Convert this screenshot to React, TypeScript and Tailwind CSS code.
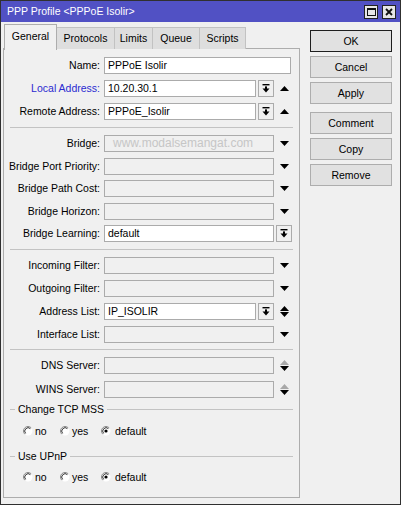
import React from "react";

const FONT = "font-['Liberation_Sans',Arial,sans-serif]";

type Arrow = "up" | "down" | "updown" | "updownGrey";

function Tri({ dir, color = "#000" }: { dir: "up" | "down"; color?: string }) {
  return (
    <svg width="9" height="5" viewBox="0 0 9 5" className="block">
      {dir === "up" ? (
        <polygon points="0,5 9,5 4.5,0" fill={color} />
      ) : (
        <polygon points="0,0 9,0 4.5,5" fill={color} />
      )}
    </svg>
  );
}

function ArrowCell({ kind }: { kind: Arrow }) {
  return (
    <div className="flex h-[17px] w-[20px] flex-col items-center justify-center gap-[1px]">
      {kind === "up" && <Tri dir="up" />}
      {kind === "down" && <Tri dir="down" />}
      {kind === "updown" && (
        <>
          <Tri dir="up" />
          <Tri dir="down" />
        </>
      )}
      {kind === "updownGrey" && (
        <>
          <Tri dir="up" color="#a8a8a8" />
          <Tri dir="down" />
        </>
      )}
    </div>
  );
}

// small "pick from list" button next to an input
function ListButton() {
  return (
    <div className="ml-[2px] flex h-[17px] w-[16px] items-center justify-center border border-[#ababab] bg-[#f0f0f0]">
      <svg width="8" height="9" viewBox="0 0 8 9" className="block">
        <rect x="0.5" y="0" width="7" height="1.4" fill="#000" />
        <rect x="3" y="2.4" width="2" height="2.6" fill="#000" />
        <polygon points="0.5,4.6 7.5,4.6 4,8.6" fill="#000" />
      </svg>
    </div>
  );
}

function Input({ value, enabled, width, watermark }: { value?: string; enabled?: boolean; width: string; watermark?: string }) {
  return (
    <div
      className={`h-[17px] ${width} overflow-hidden whitespace-nowrap border border-[#ababab] px-[3px] text-[10.5px] leading-[15px] ${
        enabled ? "bg-white text-black" : "bg-[#f0f0f0]"
      }`}
    >
      {value}
      {watermark && <span className="pl-[5px] text-[12px] text-[#c6c6c6]">{watermark}</span>}
    </div>
  );
}

type RowProps = {
  label: string;
  value?: string;
  enabled?: boolean;
  btn?: boolean;
  arrow?: Arrow;
  blue?: boolean;
  watermark?: string;
};

function Row({ label, value, enabled, btn, arrow, blue, watermark }: RowProps) {
  let width = "w-[187px]";
  if (btn && arrow) width = "w-[152px]";
  else if (btn || arrow) width = "w-[170px]";
  return (
    <div className="flex h-[17px] items-center">
      <div className={`w-[96px] whitespace-nowrap text-right text-[10.5px] leading-none ${blue ? "text-[#2b2bd0]" : "text-black"}`}>
        {label}
      </div>
      <div className="ml-[4px] flex items-center">
        <Input value={value} enabled={enabled} width={width} watermark={watermark} />
        {btn && <ListButton />}
        {arrow && <ArrowCell kind={arrow} />}
      </div>
    </div>
  );
}

function Sep({ className = "" }: { className?: string }) {
  return <div className={`mx-[6px] h-px bg-[#c3c3c3] ${className}`} />;
}

function GroupLabel({ text, className = "" }: { text: string; className?: string }) {
  return (
    <div className={`mx-[6px] flex h-[14px] items-center ${className}`}>
      <div className="h-px w-[5px] bg-[#c3c3c3]" />
      <span className="px-[3px] text-[10.5px] leading-none">{text}</span>
      <div className="h-px flex-1 bg-[#c3c3c3]" />
    </div>
  );
}

function Radio({ checked }: { checked?: boolean }) {
  return (
    <svg width="10" height="10" viewBox="0 0 10 10" className="block">
      <circle cx="5" cy="5" r="4.5" fill="#fff" />
      <path d="M1.8 8.2 A4.5 4.5 0 0 1 8.2 1.8" fill="none" stroke="#8a8a8a" strokeWidth="1" />
      <path d="M2.6 7.4 A3.4 3.4 0 0 1 7.4 2.6" fill="none" stroke="#303030" strokeWidth="1" />
      {checked && <circle cx="5" cy="5" r="1.6" fill="#000" />}
    </svg>
  );
}

function RadioRow({ className = "" }: { className?: string }) {
  const items = [
    { label: "no", w: "w-[37px]" },
    { label: "yes", w: "w-[41px]" },
    { label: "default", w: "", checked: true },
  ];
  return (
    <div className={`flex h-[14px] items-center pl-[19px] ${className}`}>
      {items.map((it) => (
        <div key={it.label} className={`flex items-center ${it.w}`}>
          <Radio checked={it.checked} />
          <span className={`${it.checked ? "ml-[4px]" : "ml-[2px]"} text-[10.5px] leading-none`}>{it.label}</span>
        </div>
      ))}
    </div>
  );
}

function Tab({ label, active, width }: { label: string; active?: boolean; width: string }) {
  if (active) {
    return (
      <div className={`relative z-10 mb-[-1px] flex h-[26px] ${width} items-start justify-center border border-b-0 border-[#adadad] bg-[#f0f0f0] pt-[6px] text-[10.5px] leading-none`}>
        {label}
      </div>
    );
  }
  return (
    <div className={`flex h-[22px] ${width} items-start justify-center border border-b-0 border-l-0 border-[#c2c2c2] bg-[#dedede] pt-[5px] text-[10.5px] leading-none`}>
      {label}
    </div>
  );
}

function SideButton({ label, primary, className = "" }: { label: string; primary?: boolean; className?: string }) {
  return (
    <div
      className={`flex h-[22px] w-[82px] items-center justify-center border bg-[#e1e1e1] text-[10.5px] leading-none ${
        primary ? "border-[#1e1e1e]" : "border-[#adadad]"
      } ${className}`}
    >
      {label}
    </div>
  );
}

export default function App() {
  return (
    <div className={`${FONT} flex h-[505px] w-[401px] flex-col border border-[#303030] bg-[#f0f0f0] text-black`}>
      {/* title bar */}
      <div className="flex h-[21px] items-center bg-[#5151c4] pl-[6px] pr-[4px]">
        <span className="flex-1 text-[10.5px] leading-none text-white">PPP Profile &lt;PPPoE Isolir&gt;</span>
        <div className="flex gap-[4px]">
          <div className="flex h-[14px] w-[14px] items-center justify-center border border-[#222] bg-[#e6e6e6]">
            <div className="h-[8px] w-[9px] border border-t-2 border-[#111]" />
          </div>
          <div className="flex h-[14px] w-[14px] items-center justify-center border border-[#222] bg-[#e6e6e6]">
            <svg width="8" height="8" viewBox="0 0 8 8" className="block">
              <path d="M1 1 L7 7 M7 1 L1 7" stroke="#111" strokeWidth="1.8" />
            </svg>
          </div>
        </div>
      </div>

      <div className="flex flex-1">
        {/* tabs + panel */}
        <div className="ml-[2px] mt-[2px] flex w-[297px] flex-col">
          <div className="relative z-10 flex h-[25px] items-end pl-[1px]">
            <Tab label="General" active width="w-[53px]" />
            <Tab label="Protocols" width="w-[58px]" />
            <Tab label="Limits" width="w-[38px]" />
            <Tab label="Queue" width="w-[47px]" />
            <Tab label="Scripts" width="w-[46px]" />
          </div>
          <div className="-mt-px flex h-[450px] flex-col border border-[#adadad] pt-[8px]">
            <div className="flex flex-col gap-[6px]">
              <Row label="Name:" value="PPPoE Isolir" enabled />
              <Row label="Local Address:" value="10.20.30.1" enabled btn arrow="up" blue />
              <Row label="Remote Address:" value="PPPoE_Isolir" enabled btn arrow="up" />
            </div>
            <Sep className="my-[7px]" />
            <div className="flex flex-col gap-[5.5px]">
              <Row label="Bridge:" arrow="down" watermark="www.modalsemangat.com" />
              <Row label="Bridge Port Priority:" arrow="down" />
              <Row label="Bridge Path Cost:" arrow="down" />
              <Row label="Bridge Horizon:" arrow="down" />
              <Row label="Bridge Learning:" value="default" enabled btn />
            </div>
            <Sep className="my-[7px]" />
            <div className="flex flex-col gap-[6px]">
              <Row label="Incoming Filter:" arrow="down" />
              <Row label="Outgoing Filter:" arrow="down" />
              <Row label="Address List:" value="IP_ISOLIR" enabled btn arrow="updown" />
              <Row label="Interface List:" arrow="down" />
            </div>
            <Sep className="mb-[7px] mt-[6px]" />
            <div className="flex flex-col gap-[7px]">
              <Row label="DNS Server:" arrow="updownGrey" />
              <Row label="WINS Server:" arrow="updownGrey" />
            </div>
            <GroupLabel text="Change TCP MSS" className="mt-[4px]" />
            <RadioRow className="mt-[8px]" />
            <GroupLabel text="Use UPnP" className="mt-[11px]" />
            <RadioRow className="mt-[7px]" />
          </div>
        </div>

        {/* buttons */}
        <div className="ml-[10px] flex flex-col pt-[8px]">
          <SideButton label="OK" primary />
          <SideButton label="Cancel" className="mt-[4px]" />
          <SideButton label="Apply" className="mt-[4px]" />
          <SideButton label="Comment" className="mt-[8px]" />
          <SideButton label="Copy" className="mt-[4px]" />
          <SideButton label="Remove" className="mt-[4px]" />
        </div>
      </div>
    </div>
  );
}
